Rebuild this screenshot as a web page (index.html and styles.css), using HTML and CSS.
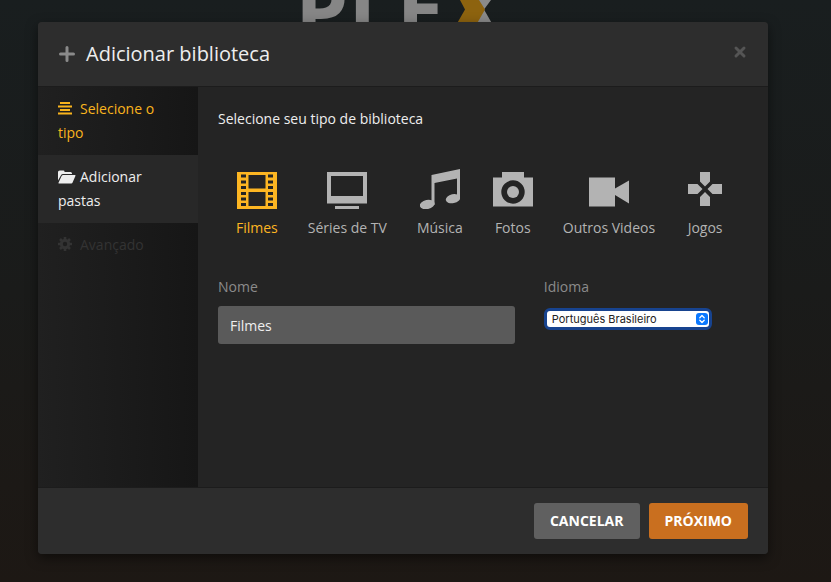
FILE: index.html
```html
<!DOCTYPE html>
<html lang="pt-BR">
<head>
<meta charset="utf-8">
<title>Adicionar biblioteca</title>
<link rel="stylesheet" href="styles.css">
</head>
<body>
<div class="brand" aria-hidden="true">
  <svg width="200" height="40" viewBox="0 0 200 40">
    <text class="brand-text" x="0" y="40">PLE</text>
    <path fill="#8a8a8a" d="M183 0h13l-7 9.500 8 14h-17l-3-6z"/>
    <path fill="#8d630f" d="M165 0h19l6 9.500-8 14h-20l8-14z"/>
  </svg>
</div>
<main class="modal" role="dialog" aria-labelledby="title">
  <header class="modal-header">
    <svg class="plus" width="16" height="16" viewBox="0 0 16 16"><path fill="none" stroke="#8a8a8a" stroke-width="3" stroke-linecap="round" d="M8 1.500v13M1.500 8h13"/></svg>
    <h1 id="title">Adicionar biblioteca</h1>
    <button class="close" type="button" aria-label="Fechar">
      <svg width="14" height="14" viewBox="0 0 14 14"><path fill="none" stroke="#555" stroke-width="3" stroke-linecap="round" d="M3 3l8 8M11 3l-8 8"/></svg>
    </button>
  </header>
  <div class="modal-body">
    <nav class="steps">
      <a class="step current" href="#tipo"><svg class="step-icon" width="14" height="14" viewBox="0 0 14 14"><path fill="currentColor" d="M2 1h10v2H2zM0 4.500h14v2H0zM2 8h10v2H2zM0 11.500h14v2H0z"/></svg>Selecione o tipo</a>
      <a class="step next" href="#pastas"><svg class="step-icon" width="18" height="14" viewBox="0 0 18 14"><path fill="currentColor" d="M0 10.500V2Q0 1 1 .7L2 .5h3.500q1 0 1 1V2h6q1.500 0 1.500 1.500V4H5Q3.600 4 3 5.200zM5.200 5H17q.8 0 .4.900l-2.800 6.600q-.4 1-1.400 1H.9q-.7 0-.4-.8L3.600 6q.5-1 1.600-1z"/></svg>Adicionar pastas</a>
      <a class="step disabled" aria-disabled="true"><svg class="step-icon" width="14" height="14" viewBox="0 0 14 14"><g fill="none" stroke="currentColor"><circle cx="7" cy="7" r="3.700" stroke-width="3"/><path stroke-width="2.600" d="M7 0v3M7 11v3M0 7h3M11 7h3M2 2l2.100 2.100M9.900 9.900L12 12M2 12l2.100-2.100M9.900 4.100L12 2"/></g></svg>Avançado</a>
    </nav>
    <section class="content">
      <h2>Selecione seu tipo de biblioteca</h2>
      <div class="types">
        <button class="type selected" type="button">
          <svg width="40" height="40" viewBox="0 0 40 40"><path fill="currentColor" fill-rule="evenodd" d="M0 3h40v37H0zM11.500 6v13.500h17V6zM11.500 23v14h17V23zM4 5.500v3h5v-3zM4 11.500v3h5v-3zM4 17v3h5v-3zM4 23v3h5v-3zM4 28.500v3h5v-3zM4 34v3h5v-3zM31 5.500v3h5v-3zM31 11.500v3h5v-3zM31 17v3h5v-3zM31 23v3h5v-3zM31 28.500v3h5v-3zM31 34v3h5v-3z"/></svg>
          <span>Filmes</span>
        </button>
        <button class="type" type="button">
          <svg width="40" height="40" viewBox="0 0 40 40"><path fill="currentColor" fill-rule="evenodd" d="M0 3h40v31.500H0zM4 7v20h32V7zM8 37h24v3H8z"/></svg>
          <span>Séries de TV</span>
        </button>
        <button class="type" type="button">
          <svg width="40" height="40" viewBox="0 0 40 40"><g fill="currentColor"><path d="M11.500 6L40 0v30h-3V9.500L14.500 14v22h-3z"/><ellipse cx="7.200" cy="35.500" rx="7.500" ry="4.500" transform="rotate(-12 7.200 35.500)"/><ellipse cx="33" cy="29.700" rx="7.300" ry="4.500" transform="rotate(-12 33 29.700)"/></g></svg>
          <span>Música</span>
        </button>
        <button class="type" type="button">
          <svg width="40" height="40" viewBox="0 0 40 40"><path fill="currentColor" fill-rule="evenodd" d="M9 3h22v5.500h9v29H0v-29h9zM20 11.300a11.700 11.700 0 1 0 0 23.400a11.700 11.700 0 1 0 0-23.400z"/><circle cx="20" cy="23" r="6" fill="currentColor"/></svg>
          <span>Fotos</span>
        </button>
        <button class="type" type="button">
          <svg width="40" height="40" viewBox="0 0 40 40"><path fill="currentColor" d="M0 8.500h26v11L40 11.500v23L26 26v11.500H0z"/></svg>
          <span>Outros Videos</span>
        </button>
        <button class="type" type="button">
          <svg width="40" height="40" viewBox="0 0 40 40"><path fill="currentColor" d="M15 3h10v9.500l-5 5-5-5zM15 37h10v-9l-5-5-5 5zM3 15h9.500l5 5-5 5H3zM37 15h-9.500l-5 5 5 5H37z"/></svg>
          <span>Jogos</span>
        </button>
      </div>
      <form class="fields">
        <div class="field">
          <label for="nome">Nome</label>
          <input id="nome" class="text-input" type="text" value="Filmes">
        </div>
        <div class="field">
          <label for="idioma">Idioma</label>
          <div class="select-wrap">
            <select id="idioma" class="select"><option>Português Brasileiro</option></select>
            <svg class="select-arrow" width="12" height="12" viewBox="0 0 12 12"><rect width="12" height="12" rx="3" fill="#0a78ff"/><path fill="none" stroke="#fff" stroke-width="1.300" stroke-linecap="round" stroke-linejoin="round" d="M3.800 4.700L6 2.500l2.200 2.200M3.800 7.300L6 9.500l2.200-2.200"/></svg>
          </div>
        </div>
      </form>
    </section>
  </div>
  <footer class="modal-footer">
    <button class="btn" type="button">Cancelar</button>
    <button class="btn primary" type="button">Próximo</button>
  </footer>
</main>
</body>
</html>
```
FILE: styles.css
```css
* { box-sizing: border-box; }

body {
  margin: 0;
  min-height: 100vh;
  padding: 22px 63px 28px 38px;
  display: flex;
  background: linear-gradient(#191e1f, #1a1b1a 50%, #1d1814);
  color: #eee;
  font: 14px/24px "Open Sans", sans-serif;
}

button, input { font: inherit; color: inherit; }
button { border: 0; padding: 0; background: none; }
svg { display: block; }

/* Logo partly hidden behind the dialog */
.brand { position: absolute; top: 0; left: 295px; }
.brand-text { font: 700 85px "Open Sans", sans-serif; fill: #868686; }

.modal {
  position: relative;
  flex: 1;
  display: flex;
  flex-direction: column;
  background: #242424;
  border-radius: 4px;
  box-shadow: 0 4px 12px rgba(0, 0, 0, .5);
  overflow: hidden;
}

.modal-header {
  display: flex;
  align-items: center;
  height: 65px;
  padding: 0 20px;
  background: #2d2d2d;
  border-bottom: 1px solid #1c1c1c;
}
.plus { margin-right: 11px; margin-left: 1px; }
h1 { margin: 0; font-size: 20px; font-weight: 400; line-height: 28px; }
.close { margin-left: auto; padding: 0 1px 4px; }

.modal-body { flex: 1; display: flex; }

.steps { width: 160px; background: linear-gradient(90deg, #202020, #161616); }
.step { display: block; padding: 10px 20px; color: #eee; text-decoration: none; }
.step-icon { display: inline-block; vertical-align: -1px; margin-right: 8px; }
.next .step-icon { margin-right: 4px; vertical-align: -2px; }
.current { color: #f9b41d; }
.next { background: #282828; }
.disabled { color: #333; }

.content { flex: 1; padding: 20px; }
h2 { margin: 0 0 38px; font-size: 14px; font-weight: 400; line-height: 24px; }

.types { display: flex; gap: 30px; padding-left: 18px; }
.type { display: flex; flex-direction: column; align-items: center; gap: 7px; color: #b3b3b3; white-space: nowrap; }
.selected { color: #fdb622; }

.fields { display: grid; grid-template-columns: 56% 1fr; gap: 29px; margin-top: 35px; }
.field label { display: block; margin-bottom: 7px; color: #8b8b8b; }
.text-input {
  display: block;
  width: 100%;
  height: 38px;
  padding: 0 12px;
  border: 0;
  border-radius: 3px;
  background: #5a5a5a;
}

.select-wrap { position: relative; width: 168px; margin-top: 9px; }
.select {
  display: block;
  appearance: none;
  width: 100%;
  height: 22px;
  padding: 0 24px 0 5px;
  border: 3px solid #17438f;
  border-radius: 6px;
  background: #fff;
  color: #222;
  font: 11px/16px Inter, sans-serif;
}
.select-arrow { position: absolute; top: 5px; right: 4px; pointer-events: none; }

.modal-footer {
  display: flex;
  justify-content: flex-end;
  gap: 9px;
  padding: 15px 20px;
  background: #2d2d2d;
  border-top: 1px solid #1c1c1c;
}
.btn {
  height: 36px;
  padding: 0 16px;
  border-radius: 3px;
  background: #606060;
  color: #fff;
  font-weight: 700;
  text-transform: uppercase;
}
.primary { background: #c96f1f; }
```
